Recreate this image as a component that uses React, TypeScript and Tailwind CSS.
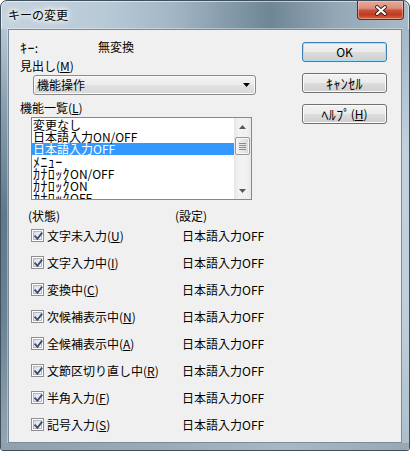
import React from "react";

const U = ({ children }: { children: React.ReactNode }) => (
  <span className="underline decoration-1 underline-offset-[1px]">{children}</span>
);

const K = ({ children }: { children: React.ReactNode }) => (
  <span className="text-[14px] tracking-[0.4px]">{children}</span>
);

function Check() {
  return (
    <div className="relative w-[13px] h-[13px] shrink-0 border border-[#8e8f8f] bg-white p-[1px]">
      <div className="w-full h-full border border-[#b4b9c0] bg-[linear-gradient(135deg,#d5dae1_0%,#eef0f3_60%,#fafafa_100%)]" />
      <svg className="absolute inset-0" width="13" height="13" viewBox="0 0 13 13">
        <path d="M3.2 6.3 L5.4 8.8 L9.6 3.4" fill="none" stroke="#3b4a77" strokeWidth="1.9" strokeLinecap="square" />
      </svg>
    </div>
  );
}

function Btn({ children, def }: { children: React.ReactNode; def?: boolean }) {
  return (
    <div
      className={
        def
          ? "h-[20px] rounded-[3px] border border-[#3c7fb1] shadow-[inset_0_0_0_1px_#a4e1f8] bg-[linear-gradient(180deg,#f2f2f2_0%,#ebebeb_50%,#dddddd_50%,#cfcfcf_100%)] flex items-center justify-center leading-[12px]"
          : "h-[20px] rounded-[3px] border border-[#707070] shadow-[inset_0_0_0_1px_#fbfbfb] bg-[linear-gradient(180deg,#f2f2f2_0%,#ebebeb_50%,#dddddd_50%,#cfcfcf_100%)] flex items-center justify-center leading-[12px]"
      }
    >
      {children}
    </div>
  );
}

const listItems: React.ReactNode[] = [
  "変更なし",
  "日本語入力ON/OFF",
  "日本語入力OFF",
  <K key="m">ﾒﾆｭｰ</K>,
  <>
    <K>ｶﾅﾛｯｸ</K>ON/OFF
  </>,
  <>
    <K>ｶﾅﾛｯｸ</K>ON
  </>,
  <>
    <K>ｶﾅﾛｯｸ</K>OFF
  </>,
];

const rows: { label: string; key: string }[] = [
  { label: "文字未入力(", key: "U" },
  { label: "文字入力中(", key: "I" },
  { label: "変換中(", key: "C" },
  { label: "次候補表示中(", key: "N" },
  { label: "全候補表示中(", key: "A" },
  { label: "文節区切り直し中(", key: "R" },
  { label: "半角入力(", key: "F" },
  { label: "記号入力(", key: "S" },
];

function Tri({ up }: { up?: boolean }) {
  return (
    <svg width="7" height="4" viewBox="0 0 7 4">
      <path d={up ? "M0 4 L3.5 0 L7 4 Z" : "M0 0 L7 0 L3.5 4 Z"} fill="#555a61" />
    </svg>
  );
}

export default function App() {
  return (
    <div className="w-[410px] h-[451px] flex flex-col rounded-t-[7px] rounded-b-[3px] border border-[#3f505c] overflow-hidden bg-[linear-gradient(90deg,#c4d3df_0%,#b9cad7_25%,#a3b6c5_42%,#7f96a7_58%,#6f8697_66%,#93a7b6_82%,#a9bbc8_100%)] shadow-[inset_0_0_0_1px_rgba(255,255,255,0.55)] text-[12px] text-black [font-family:'Noto_Sans_CJK_JP','Noto_Sans',sans-serif]">
      {/* title bar */}
      <div className="h-[28px] shrink-0 flex items-start justify-between">
        <div className="pl-[7px] pt-[7px] leading-[13px] text-[12px] [text-shadow:0_0_6px_#fff,0_0_8px_#fff,0_0_4px_#fff]">
          キーの変更
        </div>
        <div className="mr-[5px] w-[47px] h-[19px] rounded-b-[4px] border border-t-0 border-[#5c2a22] shadow-[inset_0_0_0_1px_rgba(255,220,210,0.45)] bg-[linear-gradient(180deg,#e8a898_0%,#dc8f7e_40%,#c9533a_52%,#c03a22_75%,#d8663f_100%)] flex items-center justify-center">
          <svg width="14" height="11" viewBox="0 0 14 11">
            <path d="M3 2 L11 9 M11 2 L3 9" stroke="#3a1f1b" strokeWidth="3.8" strokeLinecap="round" />
            <path d="M3 2 L11 9 M11 2 L3 9" stroke="#ffffff" strokeWidth="2.1" strokeLinecap="round" />
          </svg>
        </div>
      </div>

      <div className="flex h-[414px] shrink-0">
        <div className="w-[7px] bg-[linear-gradient(180deg,#b6c6d2_0%,#8ba1b1_18%,#5f788a_45%,#6a8294_70%,#93a5b2_100%)]" />
        {/* client */}
        <div className="w-[394px] h-[414px] border border-[#7a8c99] bg-[#f0f0f0] flex shadow-[0_0_0_1px_rgba(255,255,255,0.35)]">
          {/* left column */}
          <div className="w-[293px] pl-[11px] pt-[11px] flex flex-col">
            <div className="flex h-[12px] leading-[12px]">
              <div className="w-[78px]">
                <K>ｷｰ</K>:
              </div>
              <div>無変換</div>
            </div>
            <div className="mt-[7px] h-[12px] leading-[12px]">
              見出し(<U>M</U>)
            </div>
            <div className="mt-[3px] ml-[13px] w-[223px] h-[20px] rounded-[3px] border border-[#8a8a8a] shadow-[inset_0_0_0_1px_#fafafa] bg-[linear-gradient(180deg,#f3f3f3_0%,#ececec_50%,#e2e2e2_50%,#d8d8d8_100%)] flex items-center">
              <div className="flex-1 pl-[3px] leading-[12px]">機能操作</div>
              <div className="w-[17px] flex items-center justify-center">
                <svg width="7" height="4" viewBox="0 0 7 4">
                  <path d="M0 0 L7 0 L3.5 4 Z" fill="#000" />
                </svg>
              </div>
            </div>
            <div className="mt-[7px] h-[12px] leading-[12px]">
              機能一覧(<U>L</U>)
            </div>
            {/* list */}
            <div className="mt-[3px] ml-[11px] w-[221px] h-[83px] border border-[#828790] bg-white flex">
              <div className="flex-1 pt-[1px] overflow-hidden">
                {listItems.map((t, i) => (
                  <div
                    key={i}
                    className={
                      i === 2
                        ? "h-[12px] leading-[12px] pl-[1px] bg-[#3399ff] text-white whitespace-nowrap"
                        : "h-[12px] leading-[12px] pl-[1px] whitespace-nowrap"
                    }
                  >
                    {t}
                  </div>
                ))}
              </div>
              <div className="w-[17px] h-full flex flex-col bg-[linear-gradient(90deg,#e6e6e6_0%,#f2f2f2_30%,#f2f2f2_70%,#e9e9e9_100%)]">
                <div className="h-[17px] flex items-center justify-center">
                  <Tri up />
                </div>
                <div className="mt-[2px] mx-[1px] h-[18px] rounded-[2px] border border-[#979797] shadow-[inset_0_0_0_1px_#f8f8f8] bg-[linear-gradient(90deg,#f1f1f1_0%,#e8e8e8_50%,#d6d6d6_100%)] flex flex-col items-center justify-center gap-[1px]">
                  <div className="w-[7px] h-[1px] bg-[#8b8b8b]" />
                  <div className="w-[7px] h-[1px] bg-[#8b8b8b]" />
                  <div className="w-[7px] h-[1px] bg-[#8b8b8b]" />
                  <div className="w-[7px] h-[1px] bg-[#8b8b8b]" />
                </div>
                <div className="flex-1" />
                <div className="h-[17px] flex items-center justify-center">
                  <Tri />
                </div>
              </div>
            </div>
            {/* headers */}
            <div className="mt-[10px] flex h-[12px] leading-[12px]">
              <div className="ml-[8px] w-[147px]">(状態)</div>
              <div>(設定)</div>
            </div>
            {rows.map((r) => (
              <div key={r.key} className="h-[27px] flex items-center leading-[12px]">
                <div className="ml-[11px]">
                  <Check />
                </div>
                <div className="ml-[3px] w-[135px] whitespace-nowrap">
                  {r.label}
                  <U>{r.key}</U>)
                </div>
                <div className="whitespace-nowrap">日本語入力OFF</div>
              </div>
            ))}
          </div>
          {/* right column */}
          <div className="w-[85px] pt-[12px] flex flex-col gap-[11px]">
            <Btn def>OK</Btn>
            <Btn>
              <K>ｷｬﾝｾﾙ</K>
            </Btn>
            <Btn>
              <K>ﾍﾙﾌﾟ</K>(<U>H</U>)
            </Btn>
          </div>
        </div>
        <div className="w-[7px] bg-[linear-gradient(180deg,#a6b8c6_0%,#c3d1dc_30%,#c0ced9_70%,#aebfcb_100%)]" />
      </div>
      <div className="flex-1 bg-[linear-gradient(90deg,#8fa1ae_0%,#9aabb7_40%,#a9b8c3_70%,#97a8b4_100%)]" />
    </div>
  );
}
